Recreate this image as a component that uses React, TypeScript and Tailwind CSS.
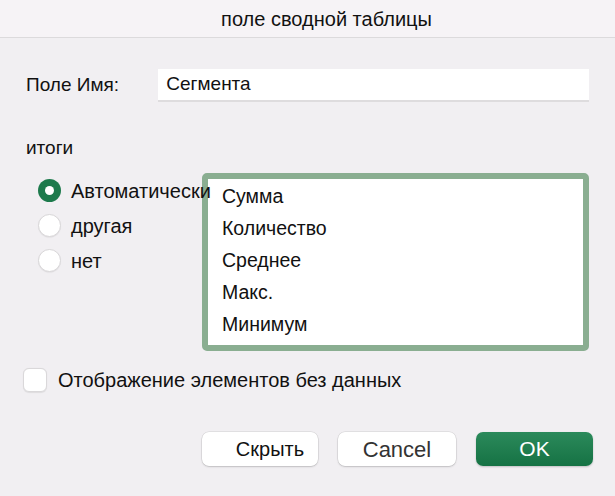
import React from 'react'

const font = { fontFamily: '"Liberation Sans", Arial, sans-serif' }

function Radio({ checked, label }: { checked?: boolean; label: string }) {
  return (
    <div className="flex h-[35px] items-center gap-[10px]">
      {checked ? (
        <span className="flex h-[23px] w-[23px] shrink-0 items-center justify-center rounded-full bg-[#1d7a4c]">
          <span className="h-[9px] w-[9px] rounded-full bg-white" />
        </span>
      ) : (
        <span className="h-[23px] w-[23px] shrink-0 rounded-full border border-[#d9d7d9] bg-white shadow-[0_0.5px_1px_rgba(0,0,0,0.08)]" />
      )}
      <span className="relative z-10 whitespace-nowrap text-[20px] text-[#111]">{label}</span>
    </div>
  )
}

export default function App() {
  const items = ['Сумма', 'Количество', 'Среднее', 'Макс.', 'Минимум']

  return (
    <div className="h-[496px] w-[615px] overflow-hidden bg-[#f1eff2]" style={font}>
      <header className="flex h-[38px] items-center justify-center border-b border-[#dcdadc] bg-[#f6f3f6] pl-[38px]">
        <span className="text-[20px] text-[#111]">поле сводной таблицы</span>
      </header>

      <div className="px-[26px]">
        <div className="mt-[31px] flex items-center">
          <span className="w-[133px] text-[19px] text-[#111]">Поле Имя:</span>
          <div className="flex h-[33px] w-[433px] items-center border-b-2 border-[#dedcde] bg-white pl-[8px] text-[19px] text-[#111]">
            Сегмента
          </div>
        </div>

        <div className="mt-[35px] h-[22px] text-[19px] leading-[22px] text-[#111]">итоги</div>

        <div className="mt-[14px] flex">
          <div className="w-[176px] pl-[12px]">
            <Radio checked label="Автоматически" />
            <Radio label="другая" />
            <Radio label="нет" />
          </div>
          <div className="h-[178px] w-[395px] rounded-[5px] border-[6px] border-[#8aae91] bg-white pl-[14px] pt-[2px]">
            {items.map((t) => (
              <div key={t} className="flex h-[32px] items-center text-[19.5px] text-[#111]">
                {t}
              </div>
            ))}
          </div>
        </div>

        <div className="ml-[-3px] mt-[17px] flex h-[24px] items-center gap-[11px]">
          <span className="h-[24px] w-[24px] rounded-[6px] border border-[#dad8da] bg-white shadow-[0_0.5px_1px_rgba(0,0,0,0.08)]" />
          <span className="text-[20px] text-[#111]">Отображение элементов без данных</span>
        </div>
      </div>

      <div className="mt-[40px] flex justify-end gap-[20px] pr-[22px]">
        <button className="flex h-[34px] w-[116px] items-center justify-center rounded-[7px] bg-white pl-[20px] text-[20px] text-[#111] shadow-[0_0_0_0.5px_rgba(0,0,0,0.12),0_1px_2px_rgba(0,0,0,0.15)]">
          Скрыть
        </button>
        <button className="flex h-[34px] w-[118px] items-center justify-center rounded-[7px] bg-white text-[22px] text-[#333] shadow-[0_0_0_0.5px_rgba(0,0,0,0.12),0_1px_2px_rgba(0,0,0,0.15)]">
          Cancel
        </button>
        <button className="flex h-[34px] w-[117px] items-center justify-center rounded-[7px] bg-gradient-to-b from-[#2b8a5b] to-[#157244] text-[21px] text-white shadow-[0_1px_2px_rgba(0,0,0,0.2)]">
          OK
        </button>
      </div>
    </div>
  )
}
